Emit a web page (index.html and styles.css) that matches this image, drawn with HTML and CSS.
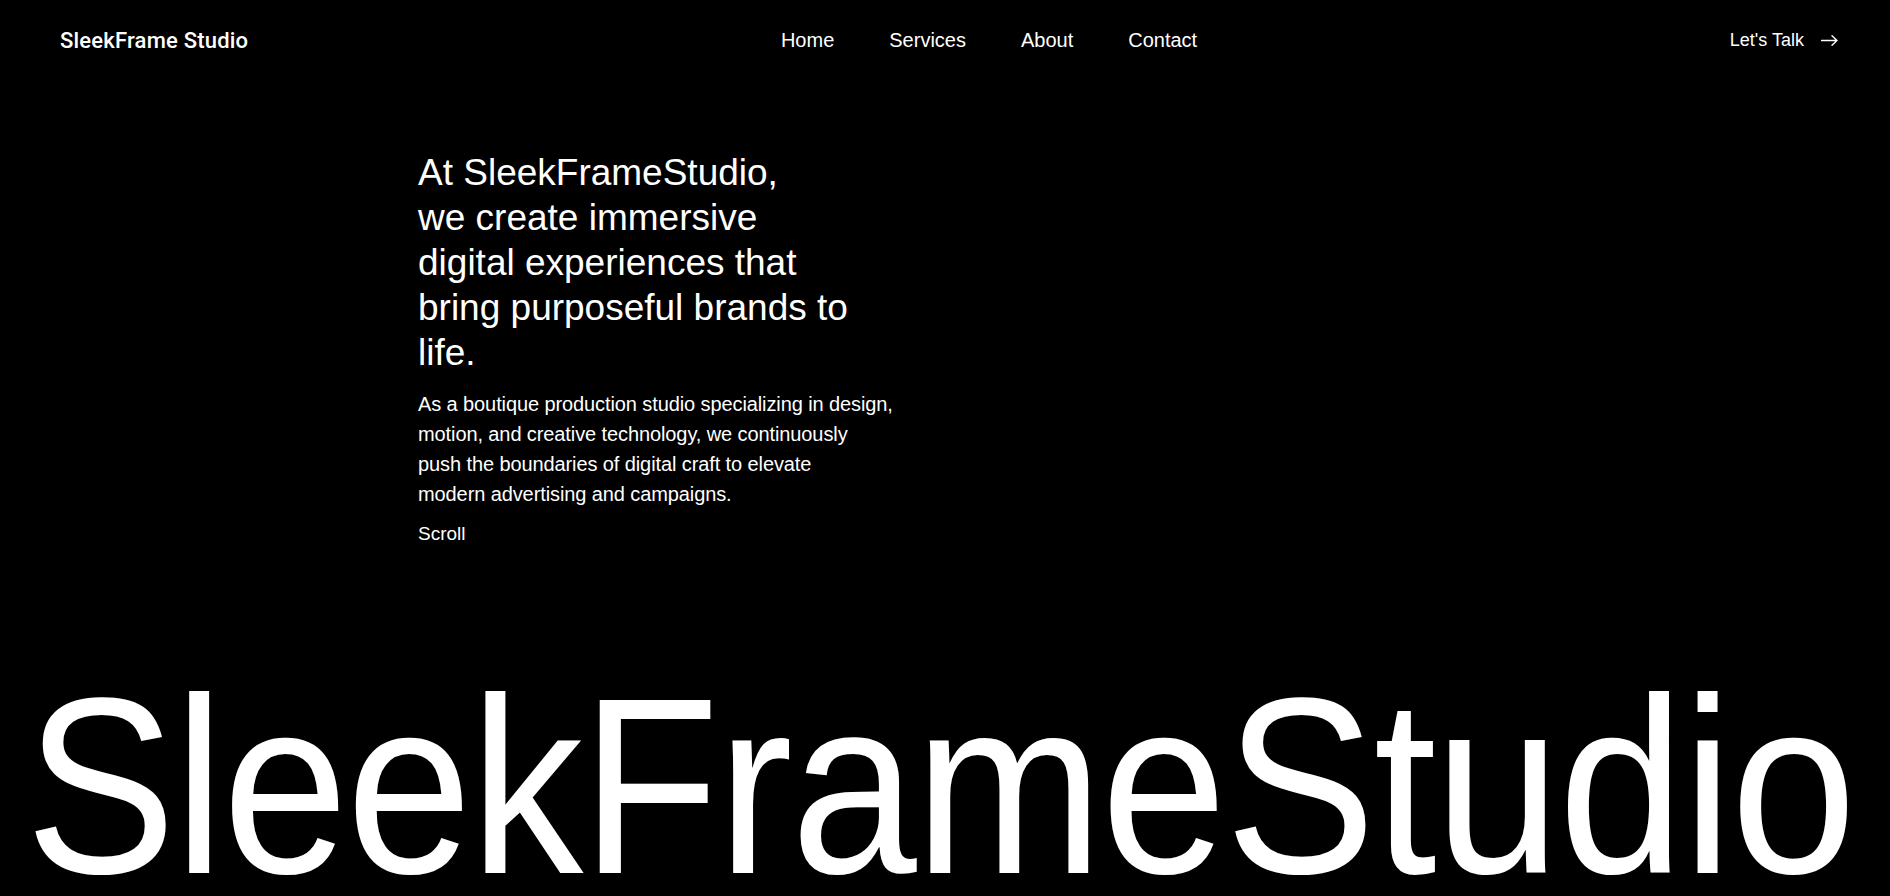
FILE: index.html
```html
<!DOCTYPE html>
<html lang="en">
<head>
<meta charset="utf-8">
<title>SleekFrame Studio</title>
<link rel="stylesheet" href="styles.css">
</head>
<body>
<div class="page">
  <header class="header">
    <a class="logo" href="#">SleekFrame Studio</a>
    <nav class="nav">
      <a href="#">Home</a>
      <a href="#">Services</a>
      <a href="#">About</a>
      <a href="#">Contact</a>
    </nav>
    <a class="cta" href="#">Let's Talk
      <svg class="cta-arrow" width="17" height="11" viewBox="0 0 17 11" aria-hidden="true"><path d="M0.5 5.5H16M11 0.8L16 5.5L11 10.2" fill="none" stroke="#fff" stroke-width="1.4" stroke-linecap="round" stroke-linejoin="round"/></svg>
    </a>
  </header>
  <section class="hero">
    <h1 class="hero-title">At SleekFrameStudio,<br>we create immersive<br>digital experiences that<br>bring purposeful brands to<br>life.</h1>
    <p class="hero-text">As a boutique production studio specializing in design,<br>motion, and creative technology, we continuously<br>push the boundaries of digital craft to elevate<br>modern advertising and campaigns.</p>
    <span class="scroll">Scroll</span>
  </section>
  <div class="wordmark">SleekFrameStudio</div>
</div>
</body>
</html>
```

FILE: styles.css
```css
* { box-sizing: border-box; }
html, body {
  margin: 0;
  padding: 0;
  background: #000;
  color: #fff;
  font-family: "Liberation Sans", Arial, sans-serif;
}
a { color: inherit; text-decoration: none; }

.page {
  height: 100vh;
  display: flex;
  flex-direction: column;
  overflow: hidden;
}

.header {
  height: 80px;
  display: flex;
  align-items: center;
  justify-content: space-between;
  padding: 0 52px 0 60px;
  flex-shrink: 0;
}
.logo {
  font-family: Roboto, "Liberation Sans", sans-serif;
  font-weight: 500;
  font-size: 22px;
  letter-spacing: 0.2px;
}
.nav {
  display: flex;
  gap: 55px;
  font-size: 20px;
}
.cta {
  display: flex;
  align-items: center;
  gap: 17px;
  font-size: 18px;
}
.cta-arrow { display: block; }

.hero {
  padding: 70px 0 0 418px;
  display: flex;
  flex-direction: column;
  align-items: flex-start;
}
.hero-title {
  margin: 0;
  font-weight: 400;
  font-size: 37px;
  line-height: 45px;
}
.hero-text {
  margin: 14px 0 0;
  font-size: 20px;
  line-height: 30px;
  letter-spacing: -0.1px;
}
.scroll {
  margin-top: 13px;
  font-size: 19px;
  line-height: 24px;
}

.wordmark {
  margin-top: auto;
  padding-left: 28px;
  font-size: 251px;
  line-height: 220px;
  letter-spacing: -2px;
  white-space: nowrap;
  transform: scaleX(0.9);
  transform-origin: left center;
  flex-shrink: 0;
}
```
